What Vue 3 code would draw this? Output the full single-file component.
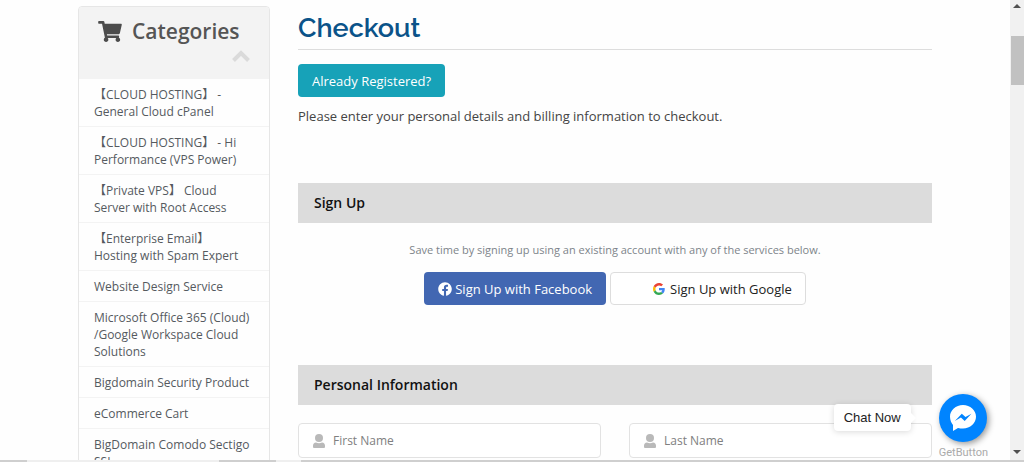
<script setup>
import { ref } from "vue";

const categories = [
	"【CLOUD HOSTING】 - General Cloud cPanel",
	"【CLOUD HOSTING】 - Hi Performance (VPS Power)",
	"【Private VPS】 Cloud Server with Root Access",
	"【Enterprise Email】 Hosting with Spam Expert",
	"Website Design Service",
	"Microsoft Office 365 (Cloud) /Google Workspace Cloud Solutions",
	"Bigdomain Security Product",
	"eCommerce Cart",
	"BigDomain Comodo Sectigo SSL",
];

const fields = [
	{ id: "first_name", label: "First Name" },
	{ id: "last_name", label: "Last Name" },
];

const form = ref({ first_name: "", last_name: "" });
</script>

<template>
	<div class="window">
		<div class="page">
			<aside class="sidebar">
				<div class="sidebar_head">
					<h3 class="sidebar_title">
						<svg class="cart" viewBox="0 0 576 512" aria-hidden="true">
							<path d="M528.12 301.319l47.273-208C578.806 78.301 567.391 64 551.99 64H159.208l-9.166-44.81C147.758 8.021 137.93 0 126.529 0H24C10.745 0 0 10.745 0 24v16c0 13.255 10.745 24 24 24h69.883l70.248 343.435C147.325 417.1 136 435.222 136 456c0 30.928 25.072 56 56 56s56-25.072 56-56c0-15.674-6.447-29.835-16.824-40h209.647C430.447 426.165 424 440.326 424 456c0 30.928 25.072 56 56 56s56-25.072 56-56c0-22.172-12.888-41.332-31.579-50.405l5.517-24.276c3.413-15.018-8.002-29.319-23.403-29.319H218.117l-6.545-32h293.145c11.206 0 20.92-7.754 23.403-18.681z" />
						</svg>
						<span>Categories</span>
					</h3>
					<svg class="chevron" viewBox="0 0 18 12" aria-hidden="true">
						<path d="M1.5 10.5 9 3l7.5 7.5" />
					</svg>
				</div>
				<a v-for="name in categories" :key="name" href="#" class="category">{{ name }}</a>
			</aside>

			<main class="content">
				<h1 class="title">Checkout</h1>
				<button type="button" class="btn btn_info">Already Registered?</button>
				<p class="intro">Please enter your personal details and billing information to checkout.</p>

				<h2 class="section_title">Sign Up</h2>
				<div class="social">
					<p class="hint">Save time by signing up using an existing account with any of the services below.</p>
					<div class="social_buttons">
						<button type="button" class="btn btn_facebook">
							<svg class="fb_icon" viewBox="0 0 512 512" aria-hidden="true">
								<path d="M504 256C504 119 393 8 256 8S8 119 8 256c0 123.78 90.69 226.38 209.25 245V327.69h-63V256h63v-54.64c0-62.15 37-96.48 93.67-96.48 27.14 0 55.52 4.84 55.52 4.84v61h-31.28c-30.8 0-40.41 19.12-40.41 38.73V256h68.78l-11 71.69h-57.78V501C413.31 482.38 504 379.78 504 256z" />
							</svg>
							<span>Sign Up with Facebook</span>
						</button>
						<button type="button" class="btn btn_google">
							<svg class="google_icon" viewBox="0 0 48 48" aria-hidden="true">
								<path fill="#EA4335" d="M24 9.5c3.54 0 6.71 1.22 9.21 3.6l6.85-6.85C35.9 2.38 30.47 0 24 0 14.62 0 6.51 5.38 2.56 13.22l7.98 6.19C12.43 13.72 17.74 9.5 24 9.5z" />
								<path fill="#4285F4" d="M46.98 24.55c0-1.57-.15-3.09-.38-4.55H24v9.02h12.94c-.58 2.96-2.26 5.48-4.78 7.18l7.73 6c4.51-4.18 7.09-10.36 7.09-17.65z" />
								<path fill="#FBBC05" d="M10.53 28.59c-.48-1.45-.76-2.99-.76-4.59s.27-3.14.76-4.59l-7.98-6.19C.92 16.46 0 20.12 0 24c0 3.88.92 7.54 2.56 10.78l7.97-6.19z" />
								<path fill="#34A853" d="M24 48c6.48 0 11.93-2.13 15.89-5.81l-7.73-6c-2.15 1.45-4.92 2.3-8.16 2.3-6.26 0-11.57-4.22-13.47-9.91l-7.98 6.19C6.51 42.62 14.62 48 24 48z" />
							</svg>
							<span>Sign Up with Google</span>
						</button>
					</div>
				</div>

				<h2 class="section_title">Personal Information</h2>
				<div class="fields">
					<label v-for="field in fields" :key="field.id" class="field" :for="field.id" :aria-label="field.label">
						<svg class="user" viewBox="0 0 12 14" aria-hidden="true">
							<circle cx="6" cy="4" r="4" />
							<path d="M3 8.500c1.800 1 4.200 1 6 0 1.900.1 3 1.400 3 3.200V13q0 1-1 1H1q-1 0-1-1v-1.300c0-1.800 1.100-3.100 3-3.200z" />
						</svg>
						<input :id="field.id" v-model="form[field.id]" type="text" :placeholder="field.label">
					</label>
				</div>
			</main>
		</div>

		<div class="scrollbar" aria-hidden="true">
			<svg class="arrow" viewBox="0 0 8 4"><path d="M0 4 4 0l4 4z" /></svg>
			<div class="thumb"></div>
			<svg class="arrow arrow_down" viewBox="0 0 8 4"><path d="M0 0h8L4 4z" /></svg>
		</div>

		<div class="chat">
			<div class="bubble">Chat Now</div>
			<div class="chat_widget">
				<button type="button" class="messenger" aria-label="Chat Now">
					<svg viewBox="0 0 28 28" aria-hidden="true">
						<path fill="#fff" d="M14 1C6.800 1 1 6.200 1 12.700c0 3.600 1.700 6.700 3 8.300V27l5-3c1.600.4 3.300.5 5 .5 7.200 0 13-5.300 13-11.800S21.200 1 14 1z" />
						<path fill="#0084ff" d="m5.800 17 7-7.200 3.700 3.300 5.900-3.300-6.700 7.200-3.800-3.400z" />
					</svg>
				</button>
				<a href="#" class="getbutton">GetButton</a>
			</div>
		</div>

		<div class="bottom_edge" aria-hidden="true">
			<i class="dark edge_a"></i>
			<i class="edge_b"></i>
			<i class="dark edge_c"></i>
			<i class="edge_d"></i>
			<i class="dark edge_rest"></i>
		</div>
	</div>
</template>

<style>
body {
	margin: 0;
	background: #fff;
}
</style>

<style scoped>
* {
	box-sizing: border-box;
}

.window {
	position: relative;
	display: flex;
	height: 100vh;
	overflow: hidden;
	background: #fefefe;
	color: #444;
	font-family: "Open Sans", "Noto Sans CJK SC", sans-serif;
	font-size: 13px;
}

.page {
	flex: 1;
	display: flex;
	align-items: flex-start;
	gap: 28px;
	padding: 6px 78px 0;
}

/* sidebar */
.sidebar {
	flex: none;
	width: 192px;
	border: 1px solid #e6e6e6;
	border-radius: 4px;
	overflow: hidden;
}

.sidebar_head {
	height: 72px;
	padding: 10px 19px 0;
	background: #f3f3f3;
}

.sidebar_title {
	display: flex;
	align-items: center;
	gap: 10px;
	margin: 0;
	color: #555;
	font-size: 21px;
	font-weight: 600;
	line-height: 28px;
}

.cart {
	width: 24px;
	height: 21px;
	fill: #4c4c4c;
}

.chevron {
	display: block;
	width: 18px;
	height: 12px;
	margin: 5px 0 0 auto;
	fill: none;
	stroke: #dadada;
	stroke-width: 4;
}

.category {
	display: block;
	padding: 7px 15px 6px;
	border-bottom: 1px solid #f3f3f3;
	color: #555a5f;
	font-size: 12px;
	line-height: 17px;
	text-decoration: none;
}

/* main column */
.content {
	flex: 1;
	min-width: 0;
}

.title {
	margin: 0 0 14px;
	border-bottom: 1px solid #ddd;
	color: #0b5389;
	font-family: Raleway, Lato, sans-serif;
	font-size: 27px;
	font-weight: 600;
	line-height: 43px;
}

.btn {
	display: inline-flex;
	align-items: center;
	height: 33px;
	padding: 0 13px;
	border: 1px solid transparent;
	border-radius: 4px;
	color: #fff;
	font-family: inherit;
	font-size: 13px;
	cursor: pointer;
}

.btn_info {
	background: #17a2b8;
}

.intro {
	margin: 8px 0 56px;
	font-size: 13px;
	line-height: 22px;
}

.section_title {
	margin: 0;
	padding: 0 16px;
	background: #dcdcdc;
	color: #111;
	font-size: 14px;
	font-weight: 600;
	line-height: 40px;
}

.social {
	padding: 18px 0 60px;
	text-align: center;
}

.hint {
	margin: 0 0 14px;
	color: #7d848a;
	font-size: 11px;
	line-height: 17px;
}

.social_buttons {
	display: flex;
	justify-content: center;
	gap: 4px;
}

.btn_facebook {
	gap: 3px;
	background: #4267b2;
}

.fb_icon {
	width: 14px;
	height: 14px;
	fill: #fff;
}

.btn_google {
	gap: 5px;
	padding-left: 42px;
	border-color: #ddd;
	background: #fff;
	color: #222;
}

.google_icon {
	width: 12px;
	height: 12px;
}

.fields {
	display: grid;
	grid-template-columns: 1fr 1fr;
	gap: 28px;
	padding-top: 18px;
}

.field {
	display: flex;
	align-items: center;
	gap: 8px;
	height: 35px;
	padding: 0 14px;
	border: 1px solid #e2e2e2;
	border-radius: 4px;
	background: #fff;
}

.user {
	flex: none;
	width: 12px;
	height: 14px;
	fill: #b9b9b9;
}

.field input {
	flex: 1;
	min-width: 0;
	padding: 0;
	border: 0;
	outline: 0;
	background: none;
	color: #444;
	font-family: inherit;
	font-size: 12px;
}

.field input::placeholder {
	color: #808080;
	opacity: 1;
}

/* scrollbar */
.scrollbar {
	flex: none;
	display: flex;
	flex-direction: column;
	align-items: flex-end;
	width: 14px;
	padding: 4px 0 8px;
	background: #f1f1f1;
}

.arrow {
	width: 8px;
	height: 4px;
	margin-right: 3px;
	fill: #505050;
}

.arrow_down {
	margin-top: auto;
}

.thumb {
	width: 13px;
	height: 49px;
	margin-top: 28px;
	background: #c1c1c1;
}

/* chat widget floats over the page */
.chat {
	position: absolute;
	right: 36px;
	bottom: 2px;
	display: flex;
	align-items: flex-start;
	gap: 28px;
}

.bubble {
	position: relative;
	margin-top: 10px;
	padding: 0 10px;
	border-radius: 4px;
	background: #fff;
	box-shadow: 0 1px 6px rgba(0, 0, 0, 0.15);
	color: #222;
	font-family: "Liberation Sans", Arial, sans-serif;
	font-size: 13px;
	line-height: 27px;
}

.bubble::after {
	content: "";
	position: absolute;
	top: 9px;
	left: 100%;
	border: 5px solid transparent;
	border-left-color: #fff;
	border-right: 0;
}

.chat_widget {
	display: flex;
	flex-direction: column;
	align-items: center;
	gap: 4px;
}

.messenger {
	display: flex;
	align-items: center;
	justify-content: center;
	width: 48px;
	height: 48px;
	padding: 0;
	border: 0;
	border-radius: 50%;
	background: #0084ff;
	box-shadow: 2px 2px 6px rgba(0, 0, 0, 0.4);
	cursor: pointer;
}

.messenger svg {
	width: 28px;
	height: 28px;
}

.getbutton {
	color: #aaa;
	font-family: Roboto, sans-serif;
	font-size: 11px;
	line-height: 14px;
	text-decoration: none;
}

/* thin strip along the window's lower edge */
.bottom_edge {
	position: absolute;
	left: 0;
	right: 0;
	bottom: 0;
	display: flex;
	height: 2px;
	background: #efefef;
}

.dark {
	background: #cfcfcf;
}

.edge_a {
	width: 27px;
}

.edge_b {
	width: 192px;
}

.edge_c {
	width: 57px;
}

.edge_d {
	width: 25px;
}

.edge_rest {
	flex: 1;
}
</style>
